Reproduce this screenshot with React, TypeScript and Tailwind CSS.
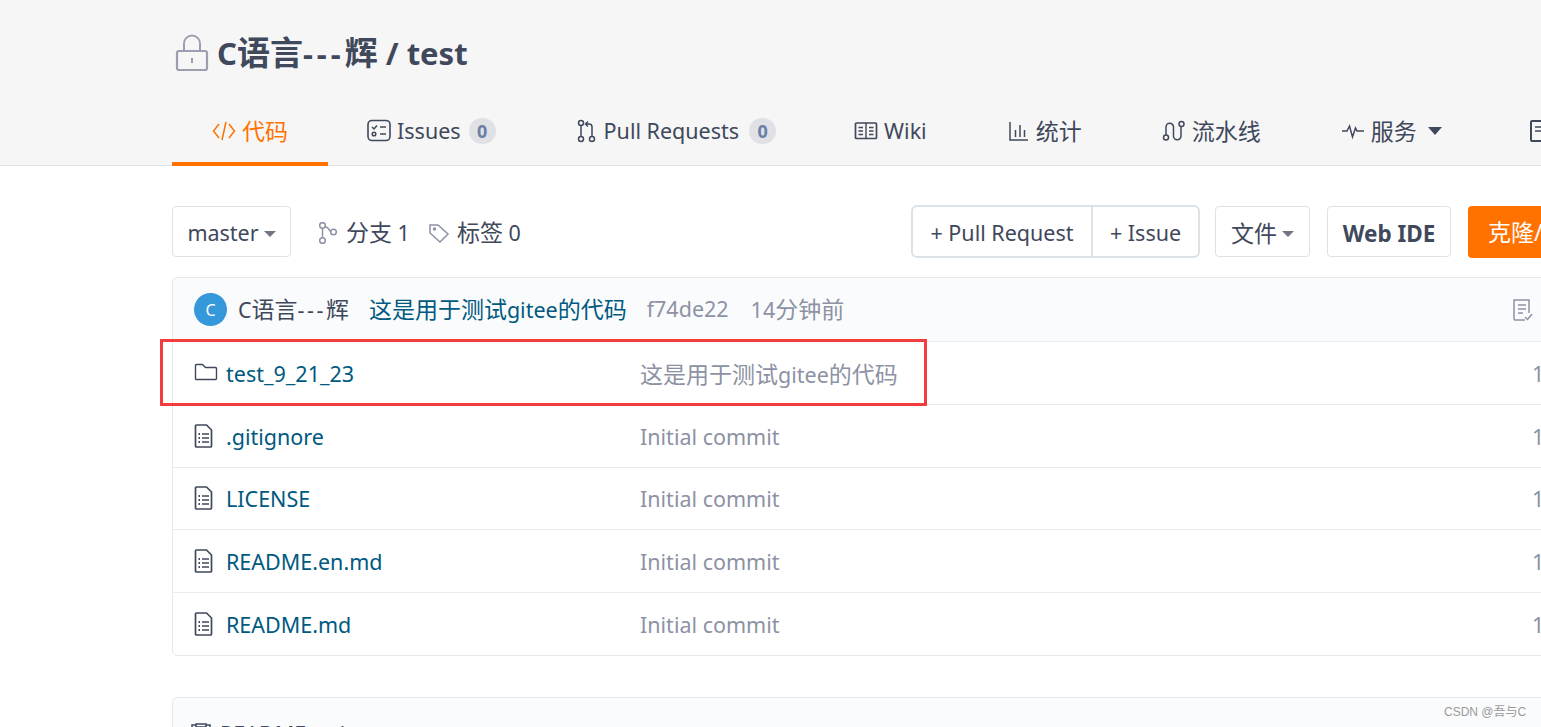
import type { ReactNode } from 'react';

const FONT = "font-['Noto_Sans','Noto_Sans_CJK_SC',sans-serif]";

function Caret({ className = '' }: { className?: string }) {
  return <span className={`inline-block h-0 w-0 border-x-[6px] border-t-[6px] border-x-transparent ${className}`} />;
}

// Chinese runs sit a bit larger than the latin text around them
function Zh({ children, className = 'text-[23px]' }: { children: ReactNode; className?: string }) {
  return <span className={className}>{children}</span>;
}

function Icon({ w = 24, h = 24, className = '', children }: { w?: number; h?: number; className?: string; children: ReactNode }) {
  return (
    <svg width={w} height={h} viewBox={`0 0 ${w} ${h}`} fill="none" stroke="currentColor" strokeWidth="1.5" className={`shrink-0 ${className}`}>
      {children}
    </svg>
  );
}

const FileIcon = () => (
  <Icon w={20} h={26} className="text-[#40485b]">
    <path d="M2.5 2h10l5 5v16a1 1 0 0 1-1 1h-14a1 1 0 0 1-1-1V3a1 1 0 0 1 1-1z" strokeWidth="1.7" />
    <path d="M8 11h7M8 15h7M8 19h7" strokeWidth="1.6" />
    <path d="M4.5 11h1.5M4.5 15h1.5M4.5 19h1.5" strokeWidth="1.8" />
  </Icon>
);

const FolderIcon = () => (
  <Icon w={24} h={20} className="-mt-0.5 text-[#40485b]">
    <path d="M1.5 3.5a1 1 0 0 1 1-1h6l3 3h10a1 1 0 0 1 1 1v10a1 1 0 0 1-1 1h-19a1 1 0 0 1-1-1z" strokeWidth="1.4" />
  </Icon>
);

function Badge({ className = '' }: { className?: string }) {
  return <span className={`flex h-[26px] w-[27px] items-center justify-center rounded-full bg-[#dfe1e5] text-[18px] font-bold text-[#6a7ea8] ${className}`}>0</span>;
}

function Tab({ icon, label, badge, active, caret, pl = 'pl-10', pr = 'pr-10' }: { icon: ReactNode; label: ReactNode; badge?: ReactNode; active?: boolean; caret?: boolean; pl?: string; pr?: string }) {
  return (
    <div className={`relative flex h-[60px] shrink-0 items-center gap-[6px] pb-2 ${pl} ${pr} text-[21.5px] ${active ? 'text-[#ff7200]' : 'text-[#40485b]'}`}>
      {icon}
      <span className="whitespace-nowrap">{label}</span>
      {badge}
      {caret && <Caret className="ml-[5px] border-x-[7px] border-t-[8px] border-t-[#40485b]" />}
      {active && <span className="absolute inset-x-0 bottom-[-1px] h-1 bg-[#ff7200]" />}
    </div>
  );
}

function Btn({ children, className = '' }: { children: ReactNode; className?: string }) {
  return <div className={`flex h-[51px] shrink-0 items-center justify-center rounded-[4px] border border-[#dce3e8] bg-white pt-1 text-[21.5px] text-[#40485b] ${className}`}>{children}</div>;
}

const ROWS = [
  { name: '.gitignore', msg: 'Initial commit' },
  { name: 'LICENSE', msg: 'Initial commit' },
  { name: 'README.en.md', msg: 'Initial commit' },
  { name: 'README.md', msg: 'Initial commit' },
];

function Row({ icon, name, msg }: { icon: ReactNode; name: string; msg: ReactNode }) {
  return (
    <div className="flex h-[62.75px] items-center border-t border-[#e8ecef] pl-[21px] text-[21.5px]">
      <span className="flex w-[32px] shrink-0 items-center">{icon}</span>
      <span className="w-[414px] shrink-0 whitespace-nowrap pt-[2px] text-[#005980]">{name}</span>
      <span className="w-[892px] shrink-0 whitespace-nowrap pt-[2px] text-[#8c92a4]">{msg}</span>
      <span className="whitespace-nowrap pt-[2px] text-[#8c92a4]">1</span>
    </div>
  );
}

export default function App() {
  return (
    <div className={`relative h-[727px] w-[1541px] overflow-hidden bg-white ${FONT}`}>
      <header className="h-[166px] border-b border-[#dfdfdf] bg-[#f6f6f6] pl-[172px]">
        <div className="flex h-[105px] items-center pl-[3px]">
          <Icon w={34} h={38} className="text-[#9aa0b0]">
            <path d="M9 17V9.5a8 8 0 0 1 16 0V17" strokeWidth="2" />
            <rect x="2" y="17" width="30" height="19" rx="2" strokeWidth="2.2" />
            <path d="M17 24v5" strokeWidth="2" />
          </Icon>
          <h1 className="ml-[8px] whitespace-nowrap text-[31px] font-bold text-[#40485b]">
            C<Zh className="text-[33px]">语言</Zh>
            <span className="tracking-[4px]">---</span>
            <Zh className="text-[33px]">辉</Zh> / test
          </h1>
        </div>
        <nav className="flex">
          <Tab
            active
            label={<Zh>代码</Zh>}
            icon={
              <Icon w={24} h={24}>
                <path d="M7 5L1.5 12L7 19M17 5l5.5 7L17 19M14 3l-4 18" />
              </Icon>
            }
          />
          <Tab
            label="Issues"
            badge={<Badge className="ml-[2px]" />}
            pl="pl-[39px]"
            icon={
              <Icon w={24} h={24}>
                <rect x="1" y="1.5" width="22" height="20" rx="4" strokeWidth="1.6" />
                <path d="M5 8l2 2 3-3.5M13 8h6M13 15h6" />
                <circle cx="7" cy="15" r="1.8" />
              </Icon>
            }
          />
          <Tab
            label="Pull Requests"
            badge={<Badge className="ml-[4px]" />}
            pr="pr-[38px]"
            icon={
              <Icon w={22} h={24}>
                <circle cx="5" cy="4" r="2.5" />
                <circle cx="5" cy="20" r="2.5" />
                <circle cx="16" cy="20" r="2.5" />
                <path d="M5 6.5v11M16 17.5V8a3 3 0 0 0-3-3h-3M12 2.5L9.5 5l2.5 2.5" />
              </Icon>
            }
          />
          <Tab
            label="Wiki"
            icon={
              <Icon w={24} h={20}>
                <rect x="1.5" y="2" width="21" height="15.5" rx="1" strokeWidth="1.7" />
                <path d="M12 2v15.5M4.5 6.5h4.5M4.5 10h4.5M4.5 13.5h4.5M15 6.5h4.5M15 10h4.5M15 13.5h4.5" strokeWidth="1.4" />
              </Icon>
            }
          />
          <Tab
            label={<Zh>统计</Zh>}
            pl="pl-[41px]"
            icon={
              <Icon w={22} h={24}>
                <path d="M2 3v18h18M7.5 11v7M12 6v12M16.5 11v7" />
              </Icon>
            }
          />
          <Tab
            label={<Zh>流水线</Zh>}
            icon={
              <Icon w={24} h={24}>
                <circle cx="4" cy="18.5" r="2.5" />
                <circle cx="19.5" cy="5" r="2.5" />
                <path d="M4 16V8a3.7 3.7 0 0 1 7.5 0v9a3.7 3.7 0 0 0 7.5 0V7.5" />
              </Icon>
            }
          />
          <Tab
            label={<Zh>服务</Zh>}
            caret
            icon={
              <Icon w={24} h={24}>
                <path d="M1 12h5l2.5-5 3 11 3-9 1.5 3h7" />
              </Icon>
            }
          />
          <Tab
            label={<Zh>文档</Zh>}
            pl="pl-[47px]"
            icon={
              <Icon w={22} h={24}>
                <rect x="2" y="2" width="18" height="20" rx="1" strokeWidth="2" />
                <path d="M6 8h10M6 12h10" />
              </Icon>
            }
          />
        </nav>
      </header>

      <main className="pl-[172px]">
        <div className="mt-10 flex h-[51px] w-[1426px] items-center">
          <Btn className="w-[119px] gap-[5px]">
            master
            <Caret className="border-t-[#71757f]" />
          </Btn>
          <div className="ml-[27px] flex items-center pt-[2px] text-[21.5px] text-[#40485b]">
            <Icon w={20} h={22} className="mr-2 text-[#8c92a4]">
              <circle cx="4.5" cy="3.5" r="2.8" />
              <circle cx="4.5" cy="18.5" r="2.8" />
              <circle cx="15.5" cy="10" r="2.8" />
              <path d="M4.5 6.5v9M7 4.5c3 .5 4 3 5.5 5" />
            </Icon>
            <span className="whitespace-nowrap"><Zh>分支</Zh> 1</span>
            <Icon w={22} h={22} className="ml-[18px] mr-[7px] text-[#8c92a4]">
              <path d="M2 3v8l10 9 8-8-10-9z" />
              <circle cx="6.5" cy="7" r="1" />
            </Icon>
            <span className="whitespace-nowrap"><Zh>标签</Zh> 0</span>
          </div>
          <div className="ml-auto flex h-[53px] w-[289px] shrink-0 rounded-[6px] border-2 border-[#dce3e8] bg-white text-[21.5px] text-[#40485b]">
            <div className="flex w-[180px] items-center justify-center whitespace-nowrap border-r-2 border-[#dce3e8] pt-1">+ Pull Request</div>
            <div className="flex flex-1 items-center justify-center whitespace-nowrap pt-1">+ Issue</div>
          </div>
          <Btn className="ml-[15px] w-[95px] gap-[5px]">
            <Zh>文件</Zh>
            <Caret className="border-t-[#71757f]" />
          </Btn>
          <Btn className="ml-[17px] w-[124px] text-[22.5px] font-bold">Web IDE</Btn>
          <div className="ml-[17px] flex h-[52px] w-[130px] shrink-0 items-center rounded-[4px] bg-[#ff7200] pl-5 pt-[2px] text-[23px] whitespace-nowrap text-white">克隆/下载</div>
        </div>

        <section className="mt-[20px] w-[1500px] rounded-[5px] border border-[#e3e9ed] bg-white">
          <div className="flex h-[63px] items-center rounded-t-[5px] bg-[#fafbfc] pl-[21px] text-[21.5px]">
            <span className="flex h-[33px] w-[33px] shrink-0 items-center justify-center rounded-full bg-[#3498db] text-[16px] text-white">C</span>
            <span className="ml-[11px] whitespace-nowrap text-[#40485b]">
              C<Zh>语言</Zh>
              <span className="tracking-[2.5px]">---</span>
              <Zh>辉</Zh>
            </span>
            <span className="ml-[20px] whitespace-nowrap text-[#005980]"><Zh>这是用于测试</Zh>gitee<Zh>的代码</Zh></span>
            <span className="ml-[20px] whitespace-nowrap text-[#8c92a4]">f74de22</span>
            <span className="ml-[22px] whitespace-nowrap text-[#8c92a4]">14<Zh>分钟前</Zh></span>
            <Icon w={22} h={24} className="ml-[668px] text-[#8c92a4]">
              <path d="M13 22H3a1 1 0 0 1-1-1V2h15v13" />
              <path d="M6 7h8M6 11h8M6 15h5M13 19l2.5 2.5L20 16" />
            </Icon>
          </div>
          <Row icon={<FolderIcon />} name="test_9_21_23" msg={<><Zh>这是用于测试</Zh>gitee<Zh>的代码</Zh></>} />
          {ROWS.map((r) => (
            <Row key={r.name} icon={<FileIcon />} name={r.name} msg={r.msg} />
          ))}
        </section>

        <section className="mt-[41px] h-[80px] w-[1500px] rounded-[5px] border border-[#e3e9ed] bg-[#fafbfc] pl-[17px] pt-5">
          <div className="flex items-center gap-2 text-[21.5px] text-[#40485b]">
            <Icon w={22} h={24}>
              <path d="M6 3H2v19h18V3h-4M6 2h10v3H6zM6 10h10M6 14h10" />
            </Icon>
            <span className="whitespace-nowrap">README.md</span>
          </div>
        </section>
      </main>

      <div className="absolute left-[160px] top-[339px] h-[67px] w-[767px] border-[3px] border-[#f43c3c]" />
      <span className="absolute left-[1444px] top-[703px] font-['Liberation_Sans','Noto_Sans_CJK_SC',sans-serif] text-[12px] whitespace-nowrap text-[#9a9a9a]">CSDN @吾与C</span>
    </div>
  );
}
